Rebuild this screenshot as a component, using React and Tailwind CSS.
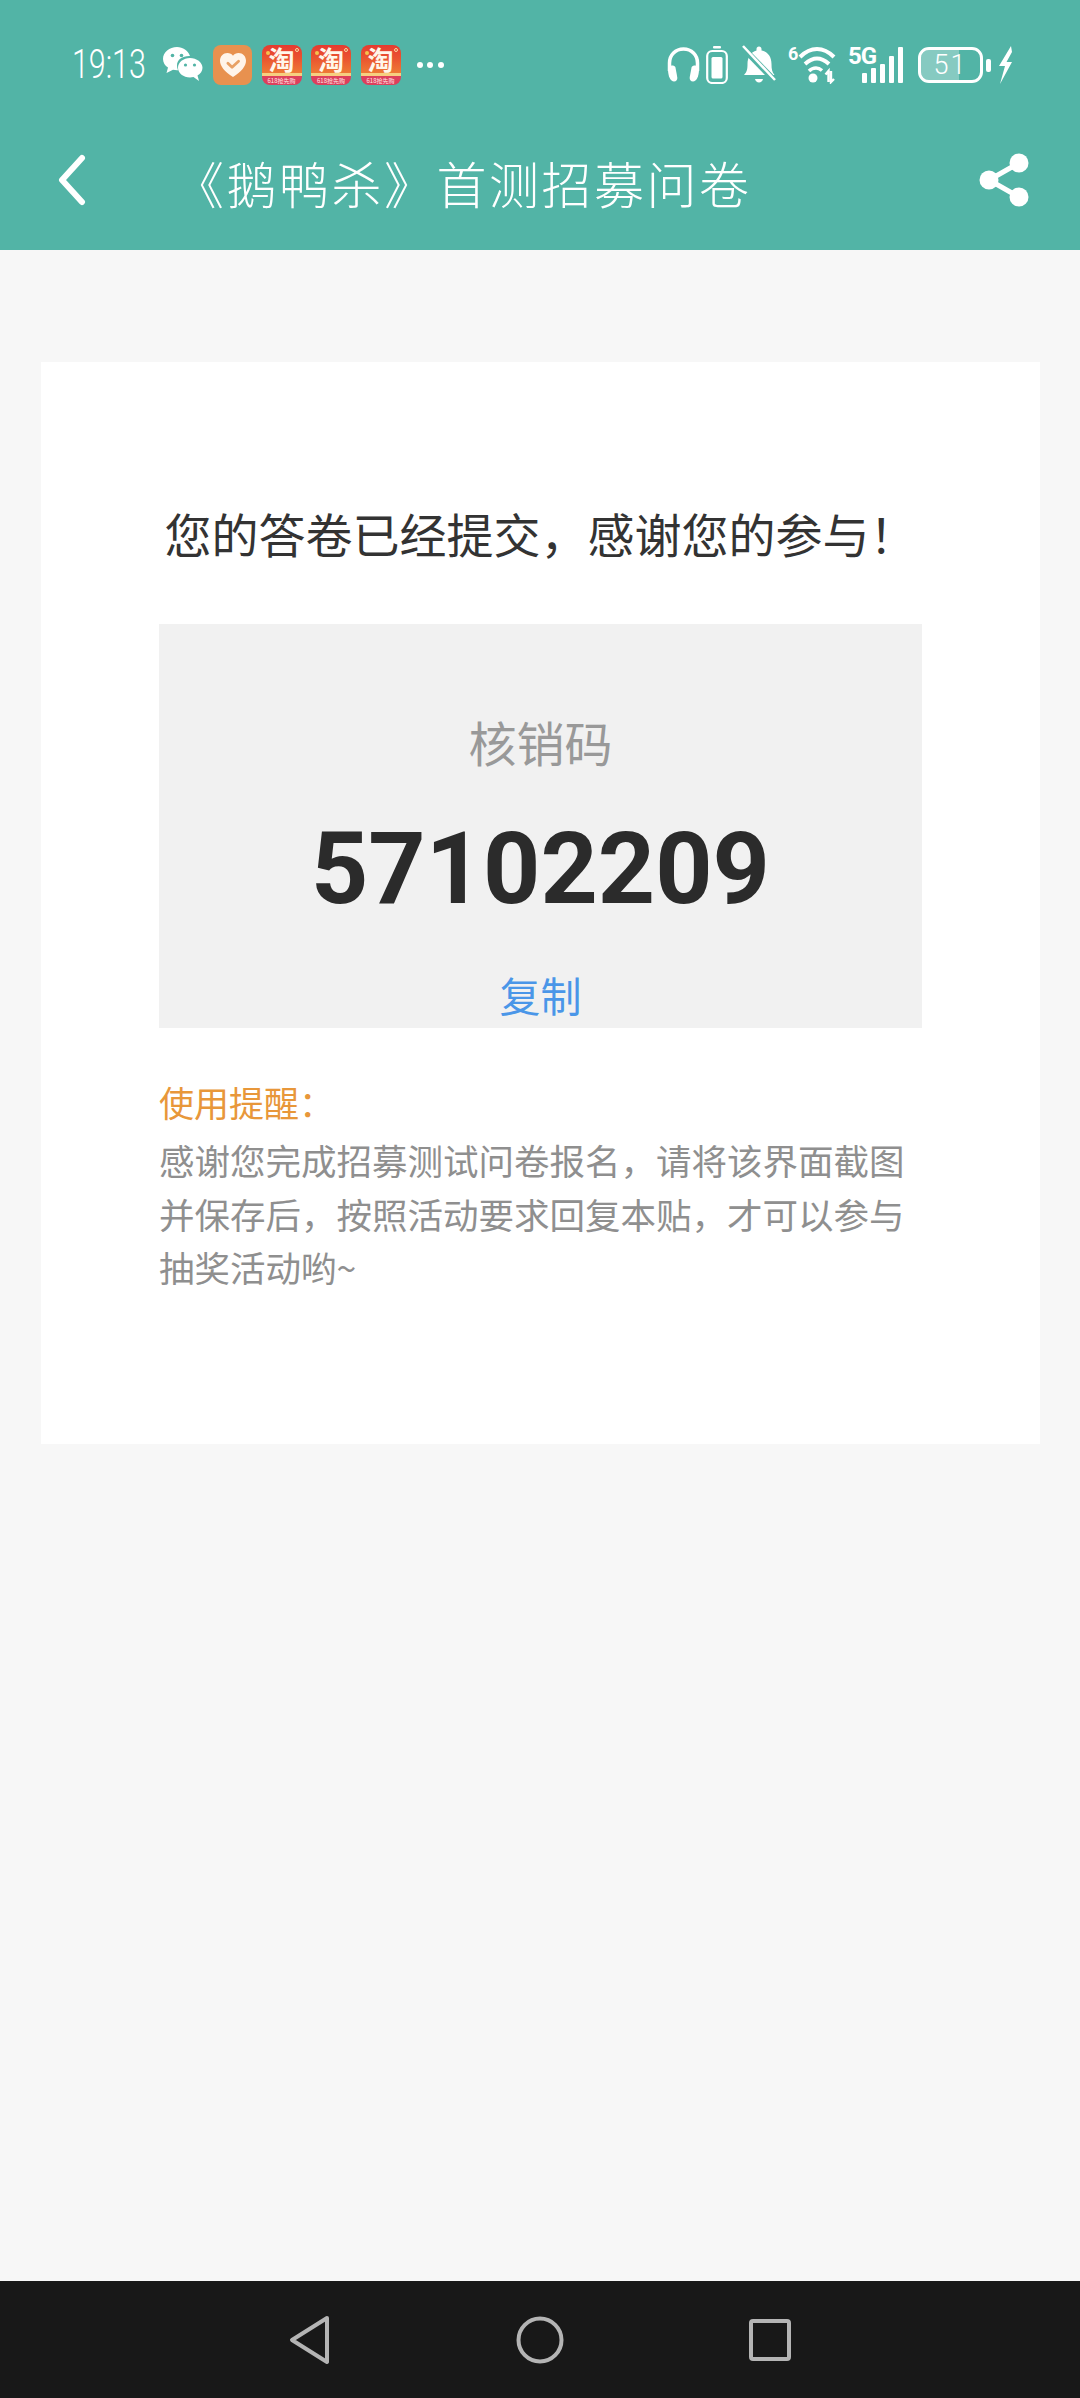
const CJK = "font-['Noto_Sans_CJK_SC','Noto_Sans',sans-serif]";

function Wechat() {
  return (
    <svg width="40" height="36" viewBox="0 0 40 36" className="block">
      <path d="M14 0C6.500 0 0 5 0 12c0 3.600 2 6.600 5 8.600L3.500 26 10 22.800c1.300.3 2.700.4 4 .4h1c-.7-1.600-1-3.100-1-4.700C14 12.500 19.500 9 26 9h1C25 3.500 20 0 14 0z" fill="#fff" />
      <path d="M27 11c-6.500 0-12 4.300-12 9.800S20.500 30.500 27 30.500c1.200 0 2.400-.2 3.500-.5l5.500 4-1.500-5.500c3-1.800 5-4.500 5-7.700C39.500 15.300 33.500 11 27 11z" fill="#fff" />
      <circle cx="9.500" cy="8.500" r="1.800" fill="#52b4a6" />
      <circle cx="18.500" cy="8.500" r="1.800" fill="#52b4a6" />
      <circle cx="22.500" cy="18" r="1.600" fill="#52b4a6" />
      <circle cx="31.500" cy="18" r="1.600" fill="#52b4a6" />
    </svg>
  );
}

function HeartApp() {
  return (
    <div className="flex h-[40px] w-[39px] items-center justify-center rounded-[8px] bg-[#e8914f]">
      <svg width="28" height="26" viewBox="0 0 30 28">
        <path d="M15 27C6 21 1 15.500 1 9.500 1 4.500 4.500 1 9 1c2.500 0 4.700 1 6 3 1.300-2 3.500-3 6-3 4.500 0 8 3.500 8 8.500 0 6-5 11.500-14 17.500z" fill="#fff4ea" />
        <path d="M9.500 12 14 16.500 21 10" stroke="#e8a064" strokeWidth="3" fill="none" strokeLinecap="round" strokeLinejoin="round" />
      </svg>
    </div>
  );
}

function Taobao() {
  return (
    <div className="relative flex h-[40px] w-[40px] flex-col">
      <div className={`flex h-[28px] items-center justify-center rounded-t-[8px] bg-gradient-to-b from-[#e63a30] via-[#ea5530] to-[#ee7a35] text-[26px] font-bold leading-[28px] text-[#fff6ea] ${CJK}`}>淘</div>
      <div className="h-[3px] bg-[#f6cf80]" />
      <div className={`h-[9px] whitespace-nowrap rounded-b-[8px] bg-[#dd3f5c] text-center text-[6px] leading-[9px] text-[#ffe4e4] ${CJK}`}>618抢先购</div>
      <span className="absolute left-[4px] top-[6px] h-[4px] w-[4px] rounded-full bg-[#f6c14e]" />
      <span className="absolute right-[3px] top-[3px] h-[4px] w-[4px] rounded-full border border-[#f8d9a0]" />
    </div>
  );
}

function Headphones() {
  return (
    <svg width="33" height="36" viewBox="0 0 33 36" className="block">
      <path d="M2.500 24v-8C2.500 8 8.500 2 16.500 2s14 6 14 14v8" fill="none" stroke="#fff" strokeWidth="3.500" />
      <path d="M1 22c0-2 2-3.500 4-3.500 1.500 0 3 .5 3.500 2l1.800 10c.3 2-1 4-3.300 4-3.500 0-6-5-6-12.500z" fill="#fff" />
      <path d="M32 22c0-2-2-3.500-4-3.500-1.500 0-3 .5-3.500 2l-1.800 10c-.3 2 1 4 3.300 4 3.500 0 6-5 6-12.500z" fill="#fff" />
    </svg>
  );
}

function MiniBattery() {
  return (
    <svg width="22" height="38" viewBox="0 0 22 38" className="block">
      <rect x="7" y="0" width="8" height="2.500" rx="1" fill="#fff" />
      <rect x="1.200" y="5" width="19.600" height="32" rx="5" fill="none" stroke="#fff" strokeWidth="2.200" />
      <rect x="5.500" y="11" width="11" height="21.500" rx="1.500" fill="#fff" />
    </svg>
  );
}

function MutedBell() {
  return (
    <svg width="34" height="40" viewBox="0 0 34 40" className="block">
      <path d="M2 30c3-3 3.500-6 3.500-11 0-7 3.500-12 9-13.500V4c0-1.500 1-2.500 2.500-2.500s2.500 1 2.500 2.500v1.500C26 7 29.500 12 29.500 19c0 5 .5 8 3 11H2z" fill="#fff" />
      <path d="M13 34h8c-.5 2-2 3.500-4 3.500s-3.500-1.500-4-3.500z" fill="#fff" />
      <path d="M-1 1 34 37" stroke="#52b4a6" strokeWidth="6" />
      <path d="M1 1 33 35" stroke="#fff" strokeWidth="2.500" />
    </svg>
  );
}

function Wifi() {
  return (
    <div className="relative h-[38px] w-[50px]">
      <span className="absolute left-0 top-[-1px] font-['Roboto',sans-serif] text-[18px] font-bold leading-[18px]">6</span>
      <svg width="40" height="38" viewBox="0 0 40 38" className="absolute left-[10px] top-0 block">
        <path d="M2 11C7 6 12 3 19 3s12 3 17 8" fill="none" stroke="#fff" strokeWidth="4" />
        <path d="M7 18c4-3.500 7.500-5.500 12-5.500S27 14.500 31 18" fill="none" stroke="#fff" strokeWidth="4" />
        <path d="M11 25c2-2 4.500-3 7-3s4 .8 6 2.500" fill="none" stroke="#fff" strokeWidth="3.500" />
        <circle cx="15" cy="32" r="4.500" fill="#fff" />
        <path d="M30.500 36V25l-3 3.500M33 25v11l3-3" fill="none" stroke="#fff" strokeWidth="2.400" />
      </svg>
    </div>
  );
}

function Signal() {
  return (
    <div className="relative flex h-[36px] w-[55px] items-end justify-end gap-[4px]">
      <span className="absolute left-0 top-0 font-['Roboto',sans-serif] text-[24px] font-bold leading-[18px] tracking-[-1px]">5G</span>
      <div className="h-[10px] w-[5px] rounded-[1px] bg-white" />
      <div className="h-[15px] w-[5px] rounded-[1px] bg-white" />
      <div className="h-[19px] w-[5px] rounded-[1px] bg-white" />
      <div className="h-[27px] w-[5px] rounded-[1px] bg-white" />
      <div className="h-[36px] w-[5px] rounded-[1px] bg-white" />
    </div>
  );
}

function Bolt() {
  return (
    <svg width="15" height="38" viewBox="0 0 15 38" className="block">
      <path d="M13 0 1 20h6L2 38 14 16H8.500L14 6z" fill="#fff" />
    </svg>
  );
}

export default function App() {
  return (
    <div className={`flex h-[2398px] w-[1080px] flex-col bg-[#f7f7f7] ${CJK}`}>
      <header className="flex h-[250px] flex-col bg-[#52b4a6] text-white">
        <div className="flex items-center justify-between pl-[72px] pr-[67px] pt-[45px]">
          <div className="flex items-center">
            <span className="w-[91px] origin-left scale-x-[.76] font-['Roboto',sans-serif] text-[40px] font-light leading-[40px]">19:13</span>
            <Wechat />
            <div className="ml-[10px] flex items-center gap-[9.500px]">
              <HeartApp />
              <Taobao />
              <Taobao />
              <Taobao />
            </div>
            <div className="ml-[16px] flex gap-[4.500px]">
              <span className="h-[6px] w-[6px] rounded-full bg-white" />
              <span className="h-[6px] w-[6px] rounded-full bg-white" />
              <span className="h-[6px] w-[6px] rounded-full bg-white" />
            </div>
          </div>
          <div className="flex items-center">
            <Headphones />
            <div className="ml-[6px]"><MiniBattery /></div>
            <div className="ml-[14px]"><MutedBell /></div>
            <div className="ml-[12px]"><Wifi /></div>
            <div className="ml-[10px]"><Signal /></div>
            <div className="relative ml-[15px] flex h-[36px] w-[65px] items-center justify-center overflow-hidden rounded-[11px] border-[3px] border-white">
              <div className="absolute inset-y-0 left-0 w-[64%] bg-white/30" />
              <span className="relative font-['Roboto',sans-serif] text-[27px] font-light leading-[30px] tracking-[2px]">51</span>
            </div>
            <div className="ml-[3px] h-[13px] w-[5px] rounded-[2px] bg-white" />
            <div className="ml-[7px]"><Bolt /></div>
          </div>
        </div>
        <div className="relative mt-[59px] flex h-[72px] items-center">
          <svg width="32" height="52" viewBox="0 0 32 52" className="absolute left-[56px] top-[10px]">
            <path d="M26 4 6 26l20 22" fill="none" stroke="#fff" strokeWidth="6" strokeLinecap="round" strokeLinejoin="round" />
          </svg>
          <h1 className="ml-[174px] whitespace-nowrap pt-[4px] text-[50px] font-light leading-[60px] tracking-[2.500px]">《鹅鸭杀》首测招募问卷</h1>
          <svg width="52" height="56" viewBox="0 0 52 56" className="absolute left-[978px] top-[8px]">
            <path d="M41 11 11 28l30 17" fill="none" stroke="#fff" strokeWidth="5" />
            <circle cx="41" cy="11" r="9.500" fill="#fff" />
            <circle cx="11" cy="28" r="9.500" fill="#fff" />
            <circle cx="41" cy="45" r="9.500" fill="#fff" />
          </svg>
        </div>
      </header>

      <main className="flex-1 px-[41px] pt-[112px]">
        <section className="flex h-[1082px] w-[999px] flex-col items-center bg-white pt-[135px]">
          <h2 className="whitespace-nowrap text-[47px] font-normal leading-[72px] text-[#333333]">您的答卷已经提交，感谢您的参与！</h2>
          <div className="mt-[55px] flex h-[404px] w-[763px] flex-col items-center bg-[#f1f1f1] pt-[81px]">
            <div className="text-[48px] leading-[72px] text-[#999999]">核销码</div>
            <div className="mt-[32px] font-['Roboto',sans-serif] text-[100px] font-bold leading-[120px] text-[#2b2b2b]">57102209</div>
            <div className="mt-[33px] text-[41px] leading-[64px] text-[#4a96e8]">复制</div>
          </div>
          <div className="mt-[47px] w-[763px]">
            <div className="text-[35px] leading-[54px] text-[#e8973a]">使用提醒：</div>
            <p className="mt-[4px] text-[35.500px] leading-[53.500px] text-[#8f8f8f]">感谢您完成招募测试问卷报名，请将该界面截图并保存后，按照活动要求回复本贴，才可以参与抽奖活动哟~</p>
          </div>
        </section>
      </main>

      <nav className="flex h-[117px] items-center justify-center gap-[184px] bg-[#181818]">
        <svg width="44" height="50" viewBox="0 0 44 50">
          <path d="M39 3 4 25l35 22z" fill="none" stroke="#b4b4b4" strokeWidth="4" strokeLinejoin="round" />
        </svg>
        <svg width="48" height="48" viewBox="0 0 48 48">
          <circle cx="24" cy="24" r="21.500" fill="none" stroke="#b4b4b4" strokeWidth="4" />
        </svg>
        <svg width="44" height="44" viewBox="0 0 44 44">
          <rect x="3" y="3" width="38" height="38" rx="2" fill="none" stroke="#b4b4b4" strokeWidth="4" />
        </svg>
      </nav>
    </div>
  );
}
